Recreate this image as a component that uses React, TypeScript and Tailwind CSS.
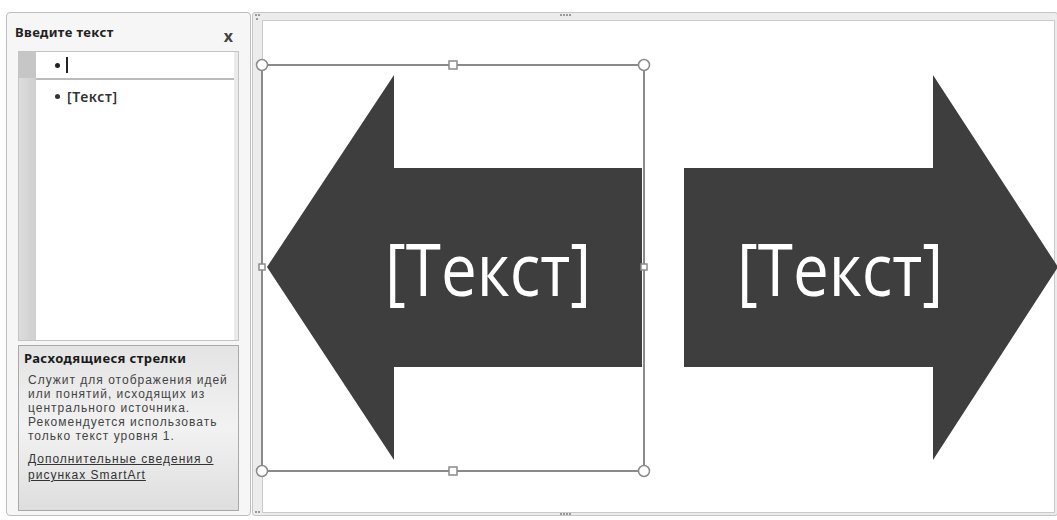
import React from "react";

const DESC = [
  "Служит для отображения идей",
  "или понятий, исходящих из",
  "центрального источника.",
  "Рекомендуется использовать",
  "только текст уровня 1.",
];

function Grip({ x, y }: { x: number; y: number }) {
  return (
    <g fill="#9a9a9a">
      {[0, 3, 6, 9].map((d) => (
        <rect key={d} x={x + d} y={y} width="2" height="2" />
      ))}
    </g>
  );
}

export default function App() {
  return (
    <div className="w-[1057px] h-[520px] overflow-hidden bg-white flex items-start pt-[12px] pl-[6px] gap-[1px] font-['Noto_Sans',sans-serif]">
      {/* Text pane */}
      <div className="w-[245px] h-[504px] shrink-0 rounded-[4px] border border-[#bdbdbd] bg-[#f6f6f6] flex flex-col px-[11px] pb-[4px]">
        <div className="h-[38px] flex items-center justify-between pr-[6px]">
          <span className="-ml-[3px] text-[13px] font-bold tracking-[0.4px] text-[#222] pt-[2px]">Введите текст</span>
          <span className="text-[16px] font-bold text-[#444] pt-[8px]">x</span>
        </div>

        <div className="h-[290px] border border-[#c4c4c4] bg-white flex">
          <div className="w-[17px] bg-gradient-to-r from-[#dcdcdc] to-[#cfcfcf] flex flex-col">
            <div className="h-[26px] bg-[#c6c6c6]" />
          </div>
          <div className="flex-1 flex flex-col">
            <div className="h-[28px] border-b-2 border-[#bcbcbc] flex items-center pl-[19px] text-[13px] text-[#222]">
              <span className="w-[5px] h-[5px] rounded-full bg-[#222] mr-[6px]" />
              <span className="w-[2px] h-[16px] bg-[#222]" />
            </div>
            <div className="h-[32px] flex items-center pl-[19px] text-[14px] font-semibold tracking-[0.6px] text-[#333]">
              <span className="w-[5px] h-[5px] rounded-full bg-[#333] mr-[7px]" />
              [Текст]
            </div>
          </div>
          <div className="w-[4px] bg-[#eaeaea]" />
        </div>

        <div className="mt-[4px] h-[166px] border border-[#a9a9a9] bg-gradient-to-b from-[#e4e4e4] via-[#f2f2f2] to-[#dedede] px-[5px] pt-[4px] text-[#333]">
          <div className="text-[13px] font-bold tracking-[0.4px] leading-[17px] text-[#1a1a1a]">Расходящиеся стрелки</div>
          <div className="pl-[4px] pt-[6px] font-['Liberation_Sans',sans-serif] text-[12px] tracking-[1px] leading-[14px] text-[#444]">
            {DESC.map((l) => (
              <div key={l} className="whitespace-nowrap">{l}</div>
            ))}
            <div className="mt-[8px] underline text-[#333] leading-[16px] whitespace-nowrap">
              <div>Дополнительные сведения о</div>
              <div>рисунках SmartArt</div>
            </div>
          </div>
        </div>
      </div>

      {/* SmartArt canvas */}
      <div className="relative w-[806px] h-[504px] shrink-0 rounded-[3px] border border-[#c6c6c6] bg-[#ececec] pl-[9px] pt-[7px] pr-[2px] pb-[2px]">
        <div className="w-full h-full border border-[#cacaca] bg-white" />
        <svg
          className="absolute left-[-1px] top-[-1px]"
          width="806"
          height="505"
          viewBox="252 12 806 505"
        >
          <Grip x={560} y={14} />
          <Grip x={560} y={513} />
          <g fill="#9a9a9a">
            <rect x="255" y="14" width="2" height="2" />
            <rect x="258" y="14" width="2" height="2" />
            <rect x="256" y="18" width="2" height="2" />
            <rect x="255" y="511" width="2" height="2" />
            <rect x="258" y="511" width="2" height="2" />
          </g>

          <polygon
            points="267,267 394,75 394,168 642,168 642,367 394,367 394,460"
            fill="#3e3e3e"
          />
          <polygon
            points="684,168 933,168 933,75 1058,267 933,460 933,367 684,367"
            fill="#3e3e3e"
          />

          <text
            x="385"
            y="296"
            textLength="206"
            lengthAdjust="spacingAndGlyphs"
            fill="#ffffff"
            fontSize="74"
            fontWeight="500"
            fontFamily="'Open Sans', sans-serif"
          >
            [Текст]
          </text>
          <text
            x="737"
            y="296"
            textLength="206"
            lengthAdjust="spacingAndGlyphs"
            fill="#ffffff"
            fontSize="74"
            fontWeight="500"
            fontFamily="'Open Sans', sans-serif"
          >
            [Текст]
          </text>

          {/* selection frame */}
          <rect x="262" y="65" width="382" height="406" fill="none" stroke="#8a8a8a" strokeWidth="2" />
          <g fill="#ffffff" stroke="#8a8a8a" strokeWidth="1.5">
            <circle cx="262" cy="65" r="5.5" />
            <circle cx="644" cy="65" r="5.5" />
            <circle cx="262" cy="471" r="5.5" />
            <circle cx="644" cy="471" r="5.5" />
            <rect x="449" y="61" width="8" height="8" />
            <rect x="449" y="467" width="8" height="8" />
            <rect x="259" y="264" width="6" height="6" />
            <rect x="641" y="264" width="6" height="6" />
          </g>
        </svg>
      </div>
    </div>
  );
}
